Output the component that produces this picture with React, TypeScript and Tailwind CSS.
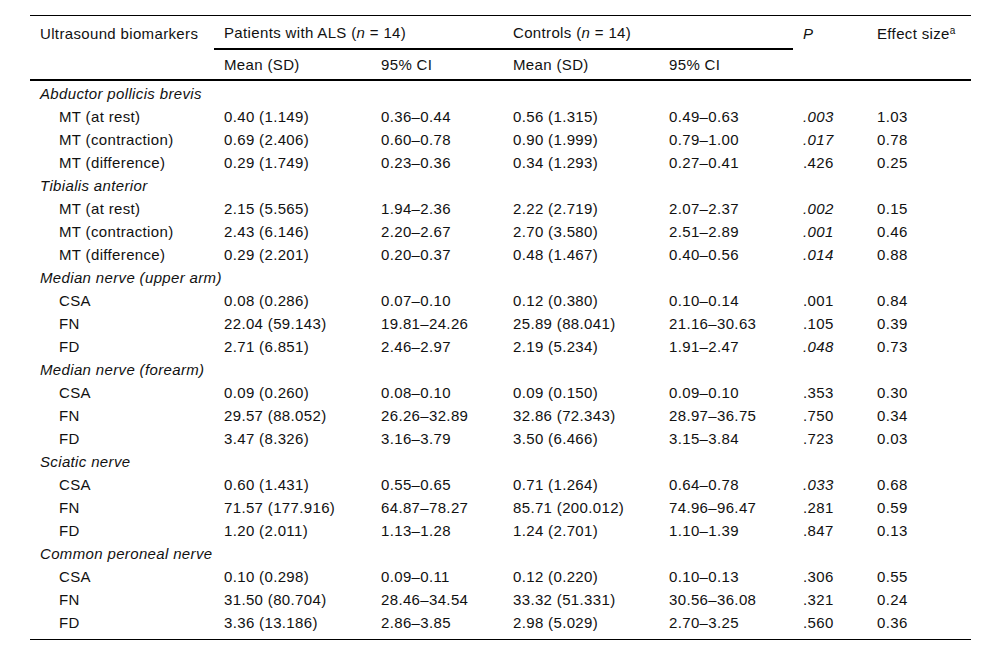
type Row = {
  label: string;
  pm: string;
  pci: string;
  cm: string;
  cci: string;
  p: string;
  sig?: boolean;
  es: string;
};

type Group = { name: string; rows: Row[] };

const GROUPS: Group[] = [
  {
    name: "Abductor pollicis brevis",
    rows: [
      { label: "MT (at rest)", pm: "0.40 (1.149)", pci: "0.36–0.44", cm: "0.56 (1.315)", cci: "0.49–0.63", p: ".003", sig: true, es: "1.03" },
      { label: "MT (contraction)", pm: "0.69 (2.406)", pci: "0.60–0.78", cm: "0.90 (1.999)", cci: "0.79–1.00", p: ".017", sig: true, es: "0.78" },
      { label: "MT (difference)", pm: "0.29 (1.749)", pci: "0.23–0.36", cm: "0.34 (1.293)", cci: "0.27–0.41", p: ".426", es: "0.25" },
    ],
  },
  {
    name: "Tibialis anterior",
    rows: [
      { label: "MT (at rest)", pm: "2.15 (5.565)", pci: "1.94–2.36", cm: "2.22 (2.719)", cci: "2.07–2.37", p: ".002", sig: true, es: "0.15" },
      { label: "MT (contraction)", pm: "2.43 (6.146)", pci: "2.20–2.67", cm: "2.70 (3.580)", cci: "2.51–2.89", p: ".001", sig: true, es: "0.46" },
      { label: "MT (difference)", pm: "0.29 (2.201)", pci: "0.20–0.37", cm: "0.48 (1.467)", cci: "0.40–0.56", p: ".014", sig: true, es: "0.88" },
    ],
  },
  {
    name: "Median nerve (upper arm)",
    rows: [
      { label: "CSA", pm: "0.08 (0.286)", pci: "0.07–0.10", cm: "0.12 (0.380)", cci: "0.10–0.14", p: ".001", es: "0.84" },
      { label: "FN", pm: "22.04 (59.143)", pci: "19.81–24.26", cm: "25.89 (88.041)", cci: "21.16–30.63", p: ".105", es: "0.39" },
      { label: "FD", pm: "2.71 (6.851)", pci: "2.46–2.97", cm: "2.19 (5.234)", cci: "1.91–2.47", p: ".048", sig: true, es: "0.73" },
    ],
  },
  {
    name: "Median nerve (forearm)",
    rows: [
      { label: "CSA", pm: "0.09 (0.260)", pci: "0.08–0.10", cm: "0.09 (0.150)", cci: "0.09–0.10", p: ".353", es: "0.30" },
      { label: "FN", pm: "29.57 (88.052)", pci: "26.26–32.89", cm: "32.86 (72.343)", cci: "28.97–36.75", p: ".750", es: "0.34" },
      { label: "FD", pm: "3.47 (8.326)", pci: "3.16–3.79", cm: "3.50 (6.466)", cci: "3.15–3.84", p: ".723", es: "0.03" },
    ],
  },
  {
    name: "Sciatic nerve",
    rows: [
      { label: "CSA", pm: "0.60 (1.431)", pci: "0.55–0.65", cm: "0.71 (1.264)", cci: "0.64–0.78", p: ".033", sig: true, es: "0.68" },
      { label: "FN", pm: "71.57 (177.916)", pci: "64.87–78.27", cm: "85.71 (200.012)", cci: "74.96–96.47", p: ".281", es: "0.59" },
      { label: "FD", pm: "1.20 (2.011)", pci: "1.13–1.28", cm: "1.24 (2.701)", cci: "1.10–1.39", p: ".847", es: "0.13" },
    ],
  },
  {
    name: "Common peroneal nerve",
    rows: [
      { label: "CSA", pm: "0.10 (0.298)", pci: "0.09–0.11", cm: "0.12 (0.220)", cci: "0.10–0.13", p: ".306", es: "0.55" },
      { label: "FN", pm: "31.50 (80.704)", pci: "28.46–34.54", cm: "33.32 (51.331)", cci: "30.56–36.08", p: ".321", es: "0.24" },
      { label: "FD", pm: "3.36 (13.186)", pci: "2.86–3.85", cm: "2.98 (5.029)", cci: "2.70–3.25", p: ".560", es: "0.36" },
    ],
  },
];

const td = "h-[23px] p-0 pl-[10px] align-middle whitespace-nowrap";

export default function App() {
  return (
    <div className="min-h-[655px] bg-white pt-[15px] pl-[30px] font-['Liberation_Sans',Arial,sans-serif] text-[15px] leading-[23px] tracking-[0.35px] text-[#111]">
      <table className="w-[941px] table-fixed border-separate border-spacing-0 border-t border-black text-left">
        <colgroup>
          <col className="w-[184px]" />
          <col className="w-[157px]" />
          <col className="w-[132px]" />
          <col className="w-[156px]" />
          <col className="w-[134px]" />
          <col className="w-[74px]" />
          <col className="w-[104px]" />
        </colgroup>
        <thead>
          <tr>
            <th rowSpan={2} className="border-b-2 border-black p-0 pl-[10px] pt-[6px] align-top font-normal">
              Ultrasound biomarkers
            </th>
            <th colSpan={2} className="h-[34px] border-b-2 border-black p-0 pl-[10px] align-middle font-normal">
              Patients with ALS (<i>n</i> = 14)
            </th>
            <th colSpan={2} className="h-[34px] border-b-2 border-black p-0 pl-[10px] align-middle font-normal">
              Controls (<i>n</i> = 14)
            </th>
            <th rowSpan={2} className="border-b-2 border-black p-0 pl-[10px] pt-[6px] align-top font-normal italic">
              P
            </th>
            <th rowSpan={2} className="border-b-2 border-black p-0 pl-[10px] pt-[6px] align-top font-normal">
              Effect size<sup className="text-[10px]">a</sup>
            </th>
          </tr>
          <tr>
            <th className="h-[31px] border-b-2 border-black p-0 pl-[10px] align-middle font-normal">Mean (SD)</th>
            <th className="h-[31px] border-b-2 border-black p-0 pl-[10px] align-middle font-normal">95% CI</th>
            <th className="h-[31px] border-b-2 border-black p-0 pl-[10px] align-middle font-normal">Mean (SD)</th>
            <th className="h-[31px] border-b-2 border-black p-0 pl-[10px] align-middle font-normal">95% CI</th>
          </tr>
        </thead>
        <tbody>
          <tr>
            <td colSpan={7} className="h-[1px] p-0" />
          </tr>
          {GROUPS.map((g) => (
            <>
              <tr key={g.name}>
                <td colSpan={7} className={`${td} italic`}>
                  {g.name}
                </td>
              </tr>
              {g.rows.map((r) => (
                <tr key={g.name + r.label}>
                  <td className={`${td} pl-[29px]`}>{r.label}</td>
                  <td className={td}>{r.pm}</td>
                  <td className={td}>{r.pci}</td>
                  <td className={td}>{r.cm}</td>
                  <td className={td}>{r.cci}</td>
                  <td className={`${td} ${r.sig ? "italic" : ""}`}>{r.p}</td>
                  <td className={td}>{r.es}</td>
                </tr>
              ))}
            </>
          ))}
          <tr>
            <td colSpan={7} className="h-[6px] border-b border-black p-0" />
          </tr>
        </tbody>
      </table>
    </div>
  );
}
